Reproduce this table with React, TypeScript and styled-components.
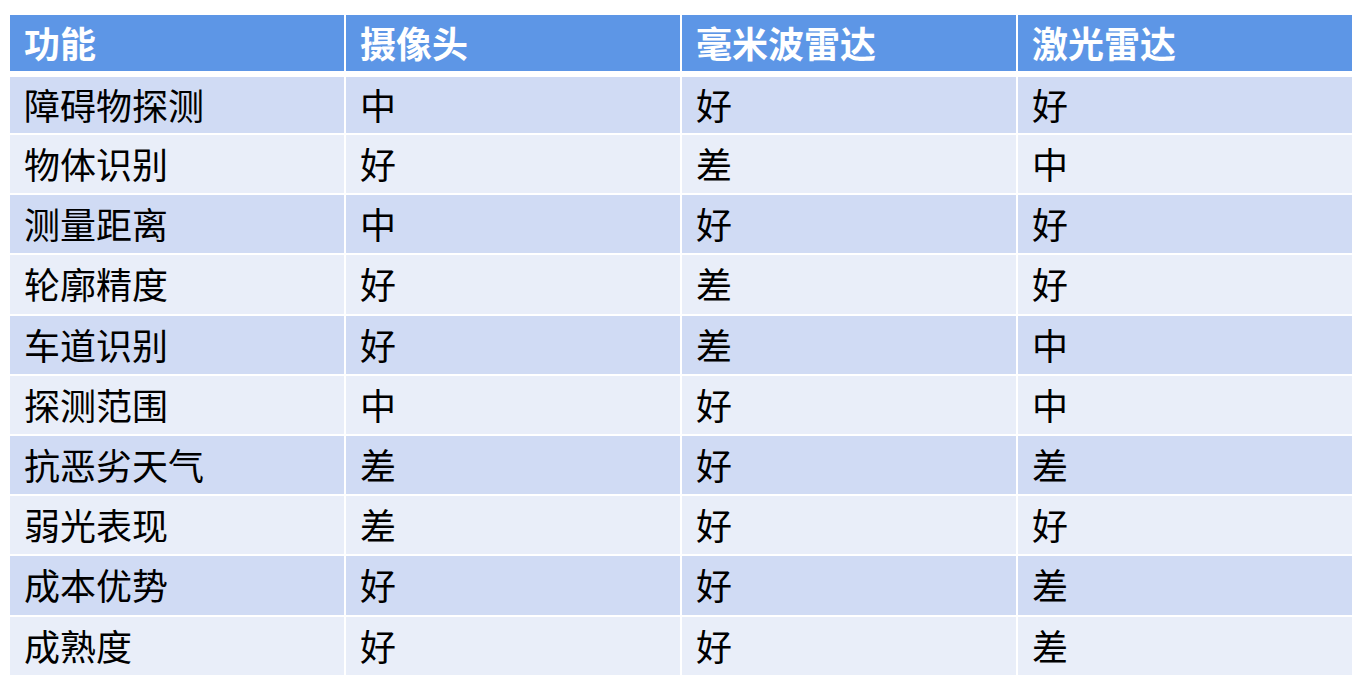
import React from 'react';
import styled, { createGlobalStyle } from 'styled-components';

const GlobalStyle = createGlobalStyle`
  body {
    margin: 0;
    background: #ffffff;
    font-family: "Noto Sans CJK SC", "Noto Sans", sans-serif;
  }
`;

const Page = styled.main`
  padding: 15px 0 0 10px;
`;

const Table = styled.div`
  display: flex;
  flex-direction: column;
  gap: 2px;
  width: 1342px;
`;

const Row = styled.div<{ $height: number }>`
  display: grid;
  grid-template-columns: repeat(4, 1fr);
  column-gap: 2px;
  height: ${(p) => p.$height}px;
`;

const HeadRow = styled(Row)`
  margin-bottom: 4px;
`;

const HeadCell = styled.div`
  display: flex;
  align-items: center;
  padding: 0 0 2px 14px;
  background: #5d96e6;
  color: #ffffff;
  font-weight: 700;
  font-size: 36px;
  line-height: 1;
`;

const Cell = styled.div<{ $band: boolean }>`
  display: flex;
  align-items: center;
  padding: 0 0 2px 14px;
  background: ${(p) => (p.$band ? '#d0dbf4' : '#e9eef9')};
  color: #000000;
  font-size: 36px;
  line-height: 1;
`;

const headers = ['功能', '摄像头', '毫米波雷达', '激光雷达'];

const rows: string[][] = [
  ['障碍物探测', '中', '好', '好'],
  ['物体识别', '好', '差', '中'],
  ['测量距离', '中', '好', '好'],
  ['轮廓精度', '好', '差', '好'],
  ['车道识别', '好', '差', '中'],
  ['探测范围', '中', '好', '中'],
  ['抗恶劣天气', '差', '好', '差'],
  ['弱光表现', '差', '好', '好'],
  ['成本优势', '好', '好', '差'],
  ['成熟度', '好', '好', '差'],
];

export default function App() {
  return (
    <>
      <GlobalStyle />
      <Page>
        <Table>
          <HeadRow $height={56}>
            {headers.map((h) => (
              <HeadCell key={h}>{h}</HeadCell>
            ))}
          </HeadRow>
          {rows.map((r, i) => (
            <Row key={r[0]} $height={i === 0 ? 56 : 58.2}>
              {r.map((c, j) => (
                <Cell key={j} $band={i % 2 === 0}>
                  {c}
                </Cell>
              ))}
            </Row>
          ))}
        </Table>
      </Page>
    </>
  );
}
